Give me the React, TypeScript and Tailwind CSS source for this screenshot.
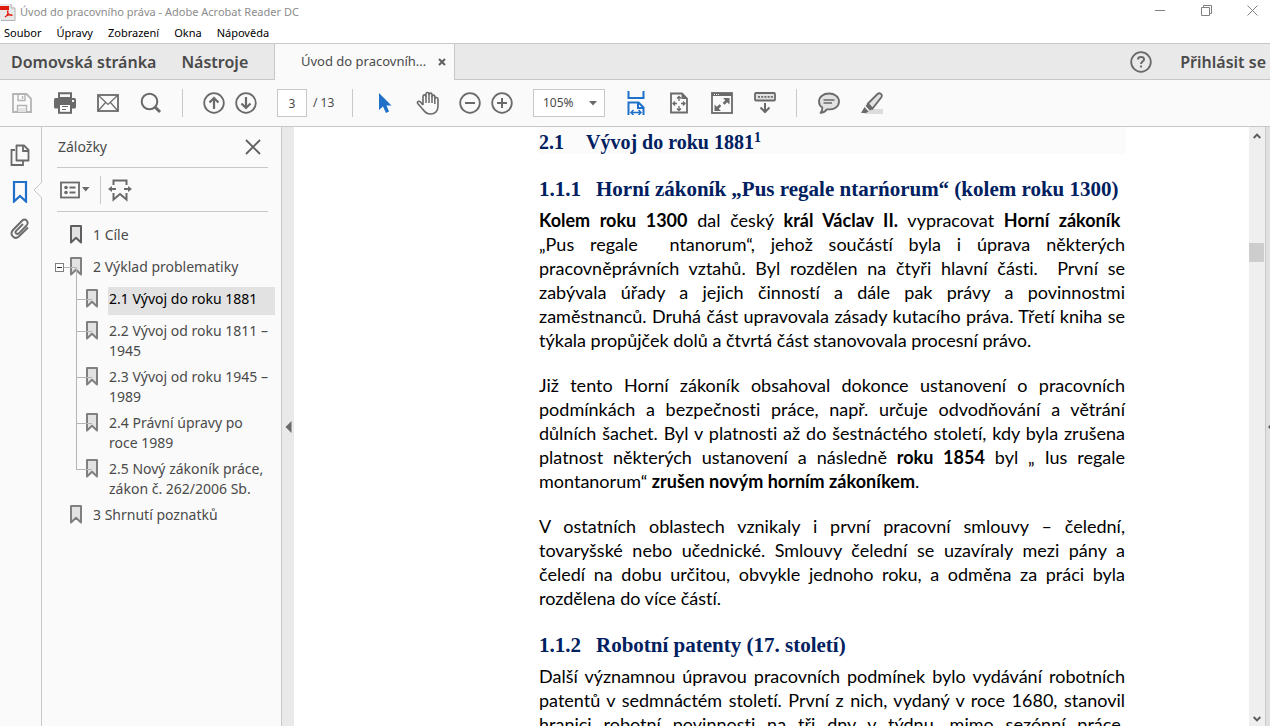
import React, { useState } from "react";

type Bit = string | { b: string };

const paragraphs: Record<string, Bit[][]> = {
  first: [
    [{ b: "Kolem roku 1300" }, " dal český ", { b: "král Václav II." }, " vypracovat ", { b: "Horní zákoník" }, "\u00a0"],
    ["„Pus regale \u00a0ntanorum“, jehož součástí byla i úprava některých"],
    ["pracovněprávních vztahů. Byl rozdělen na čtyři hlavní části. \u00a0První se"],
    ["zabývala úřady a jejich činností a dále pak právy a povinnostmi"],
    ["zaměstnanců. Druhá část upravovala zásady kutacího práva. Třetí kniha se"],
    ["týkala propůjček dolů a čtvrtá část stanovovala procesní právo."],
  ],
  second: [
    ["Již tento Horní zákoník obsahoval dokonce ustanovení o pracovních"],
    ["podmínkách a bezpečnosti práce, např. určuje odvodňování a větrání"],
    ["důlních šachet. Byl v platnosti až do šestnáctého století, kdy byla zrušena"],
    ["platnost některých ustanovení a následně ", { b: "roku 1854" }, " byl „ Ius regale"],
    ["montanorum“ ", { b: "zrušen novým horním zákoníkem" }, "."],
  ],
  third: [
    ["V ostatních oblastech vznikaly i první pracovní smlouvy – čelední,"],
    ["tovaryšské nebo učednické. Smlouvy čelední se uzavíraly mezi pány a"],
    ["čeledí na dobu určitou, obvykle jednoho roku, a odměna za práci byla"],
    ["rozdělena do více částí."],
  ],
  fourth: [
    ["Další významnou úpravou pracovních podmínek bylo vydávání robotních"],
    ["patentů v sedmnáctém století. První z nich, vydaný v roce 1680, stanovil"],
    ["hranici robotní povinnosti na tři dny v týdnu, mimo sezónní práce."],
  ],
};

function Paragraph({ lines, open = false }: { lines: Bit[][]; open?: boolean }) {
  return (
    <p className="font-['Lato',sans-serif] text-[18px] leading-[24px] text-black [font-variant-ligatures:none]">
      {lines.map((line, i) => (
        <span
          key={i}
          className={
            !open && i === lines.length - 1
              ? "block whitespace-nowrap"
              : "block whitespace-nowrap text-justify [text-align-last:justify]"
          }
        >
          {line.map((bit, j) => (typeof bit === "string" ? bit : <b key={j}>{bit.b}</b>))}
        </span>
      ))}
    </p>
  );
}

function Svg({ w, h, children, className }: { w: number; h: number; children: React.ReactNode; className?: string }) {
  return (
    <svg width={w} height={h} viewBox={`0 0 ${w} ${h}`} fill="none" className={className} aria-hidden="true">
      {children}
    </svg>
  );
}

function Tool({ label, pair = false, children }: { label: string; pair?: boolean; children: React.ReactNode }) {
  return (
    <button
      type="button"
      aria-label={label}
      className={
        pair
          ? "flex h-8 w-8 shrink-0 items-center justify-center text-[#6a6a6a]"
          : "flex h-8 w-[43px] shrink-0 items-center justify-center text-[#6a6a6a]"
      }
    >
      {children}
    </button>
  );
}

const Separator = () => <div className="mx-[10px] h-7 w-px shrink-0 bg-[#c8c8c8]" />;

function Toolbar() {
  const [page, setPage] = useState("3");
  return (
    <div className="flex h-[47px] shrink-0 items-center border-b border-[#c8c8c8] bg-[#fafafa]">
      <Tool label="Uložit">
        <Svg w={20} h={20} className="text-[#b4b4b4]">
          <path d="M1 1H14.5L19 5.5V19H1Z" stroke="currentColor" strokeWidth="1.8" />
          <path d="M6 1V7.5H13V1M10.5 3V6M5.5 19V12.5H14.5V19" stroke="currentColor" strokeWidth="1.4" />
          <path d="M6 15H14V19H6Z" fill="#e2e2e2" />
        </Svg>
      </Tool>
      <Tool label="Tisk">
        <Svg w={22} h={22}>
          <path d="M5 1.2H17V6H5Z" fill="#fafafa" stroke="currentColor" strokeWidth="2" />
          <rect y="6" width="22" height="10.5" rx="1.5" fill="currentColor" />
          <rect x="5" y="12" width="12" height="8.800" fill="#fff" stroke="currentColor" strokeWidth="2" />
          <path d="M8 14.5H14M8 17.5H12" stroke="currentColor" strokeWidth="1.2" />
          <rect x="18" y="8" width="2" height="2" fill="#fafafa" />
        </Svg>
      </Tool>
      <Tool label="Odeslat e-mailem">
        <Svg w={22} h={18}>
          <rect x="1" y="1" width="20" height="16" stroke="currentColor" strokeWidth="1.8" />
          <path d="M1.5 1.5L11 10.5L20.5 1.5M1.5 16.5L8.5 8.5M20.5 16.5L13.5 8.5" stroke="currentColor" strokeWidth="1.2" />
        </Svg>
      </Tool>
      <Tool label="Hledat">
        <Svg w={22} h={22}>
          <circle cx="9.5" cy="9.5" r="7.8" stroke="currentColor" strokeWidth="2" />
          <path d="M15 15L20 20" stroke="currentColor" strokeWidth="3" />
        </Svg>
      </Tool>
      <Separator />
      <div className="flex px-[5px]">
        <Tool label="Předchozí stránka" pair>
          <Svg w={22} h={22}>
            <circle cx="11" cy="11" r="9.8" stroke="currentColor" strokeWidth="1.8" />
            <path d="M11 17V6M6.5 10.5L11 6L15.5 10.5" stroke="currentColor" strokeWidth="2.2" />
          </Svg>
        </Tool>
        <Tool label="Další stránka" pair>
          <Svg w={22} h={22}>
            <circle cx="11" cy="11" r="9.8" stroke="currentColor" strokeWidth="1.8" />
            <path d="M11 5V16M6.5 11.5L11 16L15.5 11.5" stroke="currentColor" strokeWidth="2.2" />
          </Svg>
        </Tool>
      </div>
      <label className="ml-[10px] flex w-[65px] shrink-0 items-center gap-[6px] text-[12px] text-[#4a4a4a]">
        <input
          aria-label="Stránka"
          value={page}
          onChange={(e) => setPage(e.target.value)}
          className="h-7 w-[30px] border border-[#c8c8c8] bg-white text-center outline-none"
        />
        / 13
      </label>
      <Separator />
      <Tool label="Výběr">
        <Svg w={14} h={22}>
          <path d="M1 1V18L5 14.5L8 21L11 19.5L8.5 13.5H13.5Z" fill="#1f70c8" />
        </Svg>
      </Tool>
      <Tool label="Ruka">
        <Svg w={24} h={24}>
          <path
            d="M7 14V5.5C7 3.3 10 3.3 10 5.5V3C10 .9 13 .9 13 3V3.5C13 1.6 16 1.6 16 3.5V5.5C16 3.6 18.8 3.6 18.8 5.5V7.5C19 6 22 6 22 8V15C22 20 19 23 14.5 23C10.5 23 9 21.5 7 18.5L1.7 12.5C.8 10.5 3 9.5 4.5 11L7 14"
            fill="#fafafa"
            stroke="currentColor"
            strokeWidth="1.6"
            strokeLinejoin="round"
          />
          <path d="M10 5V12M13 3V12M16 5V12M18.8 7V13" stroke="currentColor" strokeWidth="1.5" />
        </Svg>
      </Tool>
      <div className="flex px-[5px]">
        <Tool label="Zmenšit" pair>
          <Svg w={22} h={22}>
            <circle cx="11" cy="11" r="9.8" stroke="currentColor" strokeWidth="1.8" />
            <path d="M6 11H16" stroke="currentColor" strokeWidth="2" />
          </Svg>
        </Tool>
        <Tool label="Zvětšit" pair>
          <Svg w={22} h={22}>
            <circle cx="11" cy="11" r="9.8" stroke="currentColor" strokeWidth="1.8" />
            <path d="M6 11H16M11 6V16" stroke="currentColor" strokeWidth="2" />
          </Svg>
        </Tool>
      </div>
      <div className="relative mr-[9px] ml-[10px] shrink-0 text-[12px] text-[#4a4a4a]">
        <select
          aria-label="Lupa"
          defaultValue="105%"
          className="h-7 w-[72px] appearance-none border border-[#c8c8c8] bg-white pl-[9px] outline-none"
        >
          <option>100%</option>
          <option>105%</option>
          <option>125%</option>
        </select>
        <Svg w={8} h={5} className="pointer-events-none absolute top-3 right-2 text-[#6a6a6a]">
          <path d="M0 0H8L4 4.5Z" fill="currentColor" />
        </Svg>
      </div>
      <Tool label="Přizpůsobit šířce">
        <Svg w={18} h={24} className="text-[#1f70c8]">
          <path d="M1.5 0V7H16.5V0" stroke="currentColor" strokeWidth="2" />
          <path d="M1.5 24V11.5H11.5L16.5 16.5V24M11 12V17H16" stroke="currentColor" strokeWidth="2" />
          <path d="M4 21.5H14M6.5 19L4 21.5L6.5 24M11.5 19L14 21.5L11.5 24" stroke="currentColor" strokeWidth="1.5" />
        </Svg>
      </Tool>
      <Tool label="Celá stránka">
        <Svg w={18} h={22}>
          <path d="M1 1.5H12L17 6.5V20.5H1Z" stroke="currentColor" strokeWidth="1.8" />
          <path d="M11.5 1V7H17Z" fill="currentColor" />
          <path d="M9 9V4.5M7 6.5L9 4.5L11 6.5M9 14V18.5M7 16.5L9 18.5L11 16.5M7 11.5H3M5 9.5L3 11.5L5 13.5M11 11.5H15M13 9.5L15 11.5L13 13.5" stroke="currentColor" strokeWidth="1.3" />
        </Svg>
      </Tool>
      <Tool label="Celá obrazovka">
        <Svg w={22} h={22}>
          <rect x="1" y="1" width="20" height="20" stroke="currentColor" strokeWidth="1.8" />
          <path d="M1 1H21V4H1Z" fill="currentColor" />
          <path d="M3 2.5H8" stroke="#fafafa" strokeDasharray="1 1" />
          <path d="M12 6H18.5V12.5L16.200 10.200L13.500 12.800L11.700 11L14.300 8.300ZM10 19H3.5V12.5L5.800 14.800L8.500 12.200L10.300 14L7.700 16.700Z" fill="currentColor" />
        </Svg>
      </Tool>
      <Tool label="Panel nástrojů">
        <Svg w={22} h={22}>
          <rect x="1" y="1" width="20" height="7.5" rx="1" fill="#e2e2e2" stroke="currentColor" strokeWidth="1.8" />
          <path d="M4 4.8H19" stroke="currentColor" strokeWidth="1.8" strokeDasharray="2 1.2" />
          <path d="M11 11V20M6.5 15.5L11 20L15.5 15.5" stroke="currentColor" strokeWidth="2" />
        </Svg>
      </Tool>
      <Separator />
      <Tool label="Komentář">
        <Svg w={22} h={22}>
          <path
            d="M11 1.5C5.5 1.5 1 4.8 1 9.5C1 12 2.2 14.2 4.3 15.6C4.6 18 3.5 19.8 2.5 20.8C5 20.8 7.5 19.5 8.8 17.3C16 18.3 21 14.5 21 9.5C21 4.8 16.5 1.5 11 1.5Z"
            fill="#e2e2e2"
            stroke="currentColor"
            strokeWidth="1.8"
            strokeLinejoin="round"
          />
          <path d="M5.5 8H16.5M5.5 11H14" stroke="currentColor" strokeWidth="1.3" />
        </Svg>
      </Tool>
      <Tool label="Zvýraznit text">
        <Svg w={22} h={22}>
          <path d="M8 17H22V22H3Z" fill="#dcdcdc" />
          <path d="M7 11.5L16.5 2C18.5 .3 21.8 2.2 20.5 5L11.5 16.5Z" fill="#e2e2e2" stroke="currentColor" strokeWidth="1.8" />
          <path d="M6.5 11.5L11.8 17L9 18.5L4.5 14ZM3.5 15L7.5 19.5L5 21H0Z" fill="currentColor" />
        </Svg>
      </Tool>
    </div>
  );
}

function Bookmark({ dark = false }: { dark?: boolean }) {
  return (
    <Svg w={13} h={20} className={dark ? "mt-[2px] shrink-0 text-[#5f5f5f]" : "mt-[2px] shrink-0 text-[#808080]"}>
      <path d="M1 17.5V1H11V17.5L6 12.8Z" fill="#e2e2e2" stroke="currentColor" strokeWidth="2" strokeLinejoin="round" />
    </Svg>
  );
}

const linkBase = "min-h-7 flex-1 pt-[2px] pb-[3px]";

function BookmarkPanel() {
  const children = [
    { text: ["2.1 Vývoj do roku 1881"], active: true },
    { text: ["2.2 Vývoj od roku 1811 –", "1945"] },
    { text: ["2.3 Vývoj od roku 1945 –", "1989"] },
    { text: ["2.4 Právní úpravy po", "roce 1989"] },
    { text: ["2.5 Nový zákoník práce,", "zákon č. 262/2006 Sb."] },
  ];
  return (
    <aside className="w-[240px] shrink-0 border-r border-[#c8c8c8] bg-[#fafafa] text-[14px] leading-[20px] text-[#4a4a4a]">
      <div className="mr-[13px] ml-[15px] flex h-[41px] items-center justify-between border-b border-[#c8c8c8] pr-[7px] pl-px">
        <h2>Záložky</h2>
        <button type="button" aria-label="Zavřít panel" className="text-[#5f5f5f]">
          <Svg w={16} h={16}>
            <path d="M1 1L15 15M15 1L1 15" stroke="currentColor" strokeWidth="1.8" />
          </Svg>
        </button>
      </div>
      <div className="mr-[13px] ml-[15px] flex h-11 items-center border-b border-[#c8c8c8] pl-[3px] text-[#6a6a6a]">
        <button type="button" aria-label="Volby" className="flex items-center gap-[2px]">
          <Svg w={20} h={18}>
            <rect x="1" y="1.5" width="18" height="15" stroke="currentColor" strokeWidth="1.8" />
            <circle cx="6" cy="6.5" r="1.8" fill="currentColor" />
            <circle cx="6" cy="11.5" r="1.8" fill="currentColor" />
            <path d="M9.5 6.5H15.5M9.5 11.5H15.5" stroke="currentColor" strokeWidth="1.8" />
          </Svg>
          <Svg w={8} h={5}>
            <path d="M0 0H7.5L3.7 4.5Z" fill="currentColor" />
          </Svg>
        </button>
        <div className="mr-[7px] ml-[10px] h-7 w-px bg-[#c8c8c8]" />
        <button type="button" aria-label="Najít aktuální záložku">
          <Svg w={24} h={24}>
            <path d="M5.5 7V2.5H18.5V7M5.5 15V21.5L12 16L18.5 21.5V15" stroke="currentColor" strokeWidth="2" />
            <path d="M8 11H2M16 11H22" stroke="currentColor" strokeWidth="1.8" />
            <path d="M4 8V14L0 11ZM20 8V14L24 11Z" fill="currentColor" />
          </Svg>
        </button>
      </div>
      <ul className="pt-[10px]">
        <li className="flex min-h-8 pt-px pl-7">
          <Bookmark dark />
          <a href="#c1" className={`${linkBase} ml-[10px]`}>1 Cíle</a>
        </li>
        <li>
          <div className="relative flex min-h-8 pt-px pl-7">
            <Bookmark />
            <Svg w={26} h={32} className="absolute top-0 left-3">
              <path d="M10 13.5H22.5V32" stroke="#b4b4b4" />
              <rect x="1.5" y="9.5" width="8" height="8" fill="#fff" stroke="#808080" />
              <path d="M3 13.5H8" stroke="#333" />
            </Svg>
            <a href="#c2" className={`${linkBase} ml-[10px]`}>2 Výklad problematiky</a>
          </div>
          <ul>
            {children.map((c, i) => (
              <li key={c.text[0]} className="relative flex min-h-8 pt-px pr-[6px] pl-11">
                <Bookmark />
                <span
                  className={
                    i === children.length - 1
                      ? "absolute top-0 left-[34px] h-[14px] w-px bg-[#b4b4b4]"
                      : "absolute top-0 bottom-0 left-[34px] w-px bg-[#b4b4b4]"
                  }
                />
                <span className="absolute top-[13px] left-[34px] h-px w-4 bg-[#b4b4b4]" />
                <a
                  href={`#s${i + 1}`}
                  className={c.active ? `${linkBase} ml-[9px] self-start bg-[#e2e2e2] pl-px text-black` : `${linkBase} ml-[9px] pl-px`}
                >
                  {c.text.map((t) => (
                    <span key={t} className="block whitespace-nowrap">{t}</span>
                  ))}
                </a>
              </li>
            ))}
          </ul>
        </li>
        <li className="flex min-h-8 pt-px pl-7">
          <Bookmark />
          <a href="#c3" className={`${linkBase} ml-[10px]`}>3 Shrnutí poznatků</a>
        </li>
      </ul>
    </aside>
  );
}

export default function App() {
  return (
    <div className="flex h-screen flex-col overflow-hidden bg-white font-['Noto_Sans','Open_Sans',sans-serif]">
      <header className="shrink-0">
        <div className="flex h-6 items-center text-[11px] text-[#8c8c8c]">
          <Svg w={16} h={18} className="mr-1">
            <path d="M0 1H11L15 5V17.5H0Z" fill="#e8e8e8" />
            <path d="M11 1V5H15M15 5V17.5H1" stroke="#b4b4b4" />
            <rect y="3" width="9" height="4" fill="#e01b0c" />
            <path d="M5 14C7 13 8 11 8 8.5C8 7.5 7 8 7.5 9C8.5 11.5 10 12.5 12 12.5C12.5 11.5 8 11 5 14Z" stroke="#e01b0c" strokeWidth="1.1" />
          </Svg>
          <span>Úvod do pracovního práva - Adobe Acrobat Reader DC</span>
          <div className="ml-auto flex h-5 items-center gap-[35px] self-start pr-3">
            <button type="button" aria-label="Minimalizovat">
              <Svg w={11} h={11}><path d="M0 5.5H10" stroke="#808080" /></Svg>
            </button>
            <button type="button" aria-label="Obnovit">
              <Svg w={11} h={11}>
                <path d="M.5 2.5H8.5V10.5H.5ZM2.5 2.5V.5H10.5V8.5H8.5" stroke="#808080" />
              </Svg>
            </button>
            <button type="button" aria-label="Zavřít">
              <Svg w={11} h={11}><path d="M.5 .5L10.5 10.5M10.5 .5L.5 10.5" stroke="#808080" /></Svg>
            </button>
          </div>
        </div>
        <nav className="flex h-[19px] items-start gap-[15px] pl-1 text-[11px] leading-[18px] text-black">
          {["Soubor", "Úpravy", "Zobrazení", "Okna", "Nápověda"].map((m) => (
            <button key={m} type="button">{m}</button>
          ))}
        </nav>
      </header>

      <div className="flex h-[37px] shrink-0 border-t border-[#c8c8c8] bg-[#e9e9e9] text-[16px] font-semibold text-[#4a4a4a]">
        <div className="flex w-[275px] shrink-0 items-center gap-[25px] border-r border-b border-[#c8c8c8] pl-[11px]">
          <button type="button">Domovská stránka</button>
          <button type="button">Nástroje</button>
        </div>
        <div className="flex w-[180px] shrink-0 items-center justify-between border-r border-[#c8c8c8] bg-[#fafafa] pr-2 pl-[26px] text-[13px] font-normal">
          <button type="button">Úvod do pracovníh...</button>
          <button type="button" aria-label="Zavřít kartu">
            <Svg w={8} h={8}><path d="M1 1L7 7M7 1L1 7" stroke="#5f5f5f" strokeWidth="2" /></Svg>
          </button>
        </div>
        <div className="flex flex-1 items-center justify-end gap-[28px] border-b border-[#c8c8c8] pr-1">
          <button type="button" aria-label="Nápověda">
            <Svg w={22} h={22}>
              <circle cx="11" cy="11" r="9.8" stroke="#6a6a6a" strokeWidth="1.8" />
              <path d="M8 8.5C8 5.3 14 5.3 14 8.5C14 10.5 11 10.5 11 13" stroke="#6a6a6a" strokeWidth="2" />
              <rect x="10" y="14.5" width="2" height="2" fill="#6a6a6a" />
            </Svg>
          </button>
          <button type="button">Přihlásit se</button>
        </div>
      </div>

      <Toolbar />

      <div className="flex min-h-0 flex-1">
        <div className="relative flex w-[42px] shrink-0 flex-col items-center border-r border-[#c8c8c8] bg-[#fafafa] pt-[9px] pr-[2px] text-[#6a6a6a]">
          <button type="button" aria-label="Miniatury stránek" className="flex h-[37px] items-center">
            <Svg w={20} h={22}>
              <path d="M5 6H1.5V21H13V17" stroke="currentColor" strokeWidth="1.8" />
              <path d="M6.5 1.5H14L18.5 6V16.5H6.5Z" fill="#fafafa" stroke="currentColor" strokeWidth="1.8" strokeLinejoin="round" />
              <path d="M13 1.5V7H18.5" stroke="currentColor" strokeWidth="1.8" />
            </Svg>
          </button>
          <button type="button" aria-label="Záložky" className="flex h-[37px] items-center">
            <Svg w={16} h={23}>
              <path d="M2 21.5V2H14V21.5L8 16Z" stroke="#1f70c8" strokeWidth="2.2" />
            </Svg>
          </button>
          <button type="button" aria-label="Přílohy" className="flex h-[37px] items-center">
            <Svg w={20} h={22}>
              <path
                d="M13 6L6 13C4.5 15 7 17 8.8 15.3L16.5 7.5C19.5 4 15.5 -.3 12 2.8L3 12C-1 16.5 4.5 22.5 9 18.3L18 9.5"
                stroke="currentColor"
                strokeWidth="1.9"
              />
            </Svg>
          </button>
          <Svg w={9} h={16} className="absolute top-[55px] -right-px">
            <path d="M8 1H9V15H8Z" fill="#fafafa" />
            <path d="M8.5 .5L1 8L8.5 15.5" stroke="#c8c8c8" />
          </Svg>
        </div>

        <BookmarkPanel />

        <button type="button" aria-label="Skrýt panel" className="flex w-3 shrink-0 items-center justify-center bg-[#e9e9e9]">
          <Svg w={7} h={12}><path d="M6.5 0V12L.5 6Z" fill="#6a6a6a" /></Svg>
        </button>

        <main className="min-w-0 flex-1 overflow-hidden bg-white pl-[244px]">
          <article className="w-[588px]">
            <h1 className="flex h-[27px] bg-[#fbfbfb] pl-px font-['Liberation_Serif',serif] text-[20px] leading-[30px] font-bold text-[#002060]">
              <span className="w-[47px]">2.1</span>
              <span>
                Vývoj do roku 1881<sup className="text-[14px]">1</sup>
              </span>
            </h1>
            <div className="px-px">
              <h2 className="mt-[23px] flex font-['Liberation_Serif',serif] text-[21px] leading-[24px] font-bold text-[#002060]">
                <span className="w-[57px]">1.1.1</span>
                <span className="whitespace-nowrap">Horní zákoník „Pus regale ntarńorum“ (kolem roku 1300)</span>
              </h2>
              <div className="mt-[7px] flex flex-col gap-[21px]">
                <Paragraph lines={paragraphs.first} />
                <Paragraph lines={paragraphs.second} />
                <Paragraph lines={paragraphs.third} />
              </div>
              <h2 className="mt-[23px] flex font-['Liberation_Serif',serif] text-[21px] leading-[24px] font-bold text-[#002060]">
                <span className="w-[57px]">1.1.2</span>
                <span className="whitespace-nowrap">Robotní patenty (17. století)</span>
              </h2>
              <div className="mt-[7px]">
                <Paragraph lines={paragraphs.fourth} open />
              </div>
            </div>
          </article>
        </main>

        <div className="flex w-4 shrink-0 flex-col items-center bg-[#efefef]">
          <button type="button" aria-label="Posunout nahoru" className="flex h-[18px] items-center">
            <Svg w={8} h={6}><path d="M.7 5L4 1.7L7.3 5" stroke="#5a5a5a" strokeWidth="1.9" /></Svg>
          </button>
          <div className="mt-[98px] h-[19px] w-[15px] self-start bg-[#cdcdcd]" />
          <button type="button" aria-label="Posunout dolů" className="mt-auto flex h-[14px] items-center">
            <Svg w={8} h={6}><path d="M.7 1L4 4.3L7.3 1" stroke="#5a5a5a" strokeWidth="1.9" /></Svg>
          </button>
        </div>
        <button type="button" aria-label="Zobrazit panel nástrojů" className="flex w-[5px] shrink-0 items-center justify-end border-l border-[#c8c8c8] bg-[#e0e0e0]">
          <Svg w={2} h={4}><path d="M2 0V4L0 2Z" fill="#5a5a5a" /></Svg>
        </button>
      </div>
    </div>
  );
}
